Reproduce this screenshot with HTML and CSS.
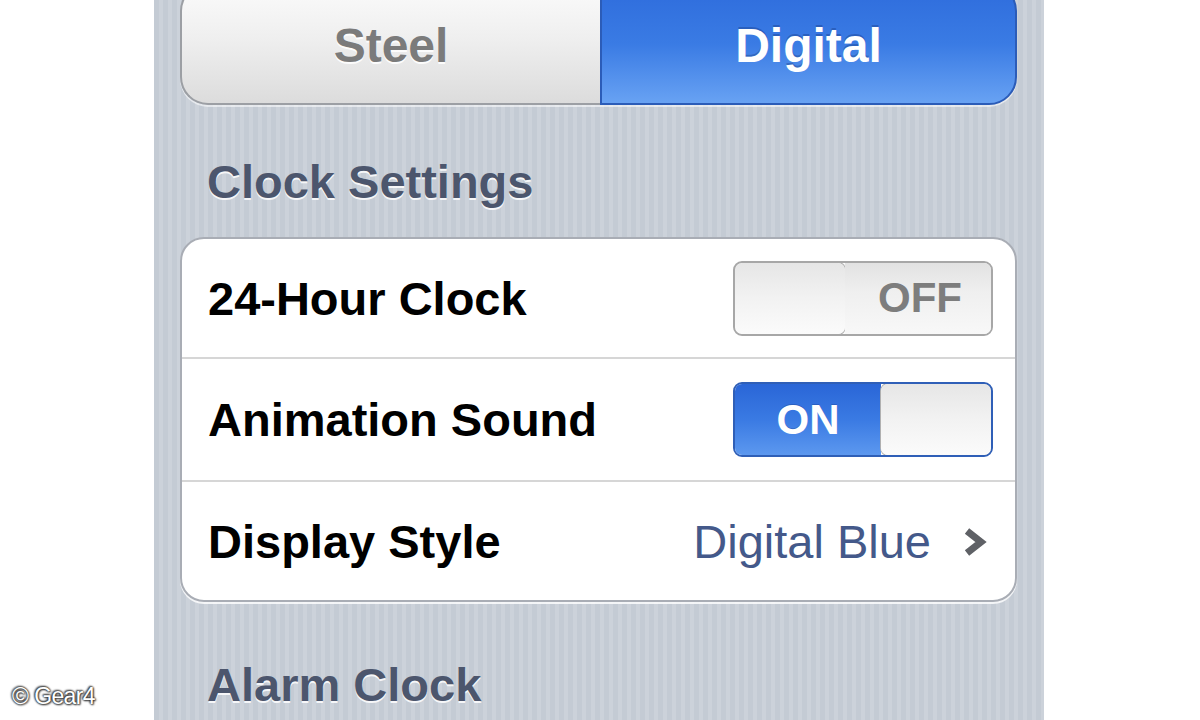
FILE: index.html
```html
<!DOCTYPE html>
<html lang="en">
<head>
<meta charset="utf-8">
<title>Clock Settings</title>
<link rel="stylesheet" href="styles.css">
</head>
<body>
<div class="page">
  <div class="gutter">
    <div class="credit">© Gear4</div>
  </div>
  <main class="panel">
    <div class="segmented">
      <div class="seg seg-off">Steel</div>
      <div class="seg seg-on">Digital</div>
    </div>

    <h2 class="section-title">Clock Settings</h2>
    <div class="card">
      <div class="row">
        <span class="label">24-Hour Clock</span>
        <div class="switch switch-off">
          <div class="knob"></div>
          <div class="track-off">OFF</div>
        </div>
      </div>
      <div class="row">
        <span class="label">Animation Sound</span>
        <div class="switch switch-on">
          <div class="track-on">ON</div>
          <div class="knob"></div>
        </div>
      </div>
      <div class="row">
        <span class="label">Display Style</span>
        <span class="value">Digital Blue</span>
        <svg class="chevron" width="28" height="30" viewBox="0 0 28 30"><path d="M6 4 L20 15 L6 26" fill="none" stroke="#5f6166" stroke-width="7" stroke-linejoin="miter"/></svg>
      </div>
    </div>

    <h2 class="section-title alarm">Alarm Clock</h2>
  </main>
  <div class="gutter-right"></div>
</div>
</body>
</html>
```
FILE: styles.css
```css
html, body {
  margin: 0;
  padding: 0;
  background: #ffffff;
  width: 1200px;
  height: 720px;
  overflow: hidden;
  font-family: "Liberation Sans", Arial, Helvetica, sans-serif;
}

.page {
  display: flex;
  height: 720px;
}

.gutter {
  width: 154px;
  flex: none;
  display: flex;
  flex-direction: column;
  justify-content: flex-end;
}

.credit {
  padding: 0 0 10px 12px;
  font-size: 23px;
  letter-spacing: -0.6px;
  color: #ffffff;
  text-shadow: 0 0 2px #333, 0 0 2px #333, 1px 1px 2px #444, -1px -1px 2px #444;
}

.gutter-right {
  flex: 1;
}

.panel {
  width: 890px;
  flex: none;
  box-sizing: border-box;
  padding: 0 27px 0 26px;
  height: 720px;
  overflow: hidden;
  background-color: #c9cfd7;
  background-image: repeating-linear-gradient(90deg, #c4cbd4 0px, #c4cbd4 5px, #ccd2da 5px, #ccd2da 9px);
}

/* Segmented control */
.segmented {
  display: flex;
  margin-top: -17px;
  height: 122px;
  border-radius: 28px;
  box-shadow: 0 2px 0 rgba(255,255,255,0.55);
}

.seg {
  box-sizing: border-box;
  height: 122px;
  display: flex;
  align-items: center;
  justify-content: center;
  font-size: 48px;
  font-weight: bold;
  padding-top: 2px;
}

.seg-off {
  width: 420px;
  border: 2px solid #9c9fa4;
  border-right: none;
  border-radius: 28px 0 0 28px;
  background: linear-gradient(#fbfbfb 0%, #efefef 45%, #dcdcdc 100%);
  color: #7b7b7b;
  text-shadow: 0 2px 0 rgba(255,255,255,0.9);
}

.seg-on {
  flex: 1;
  border: 2px solid #2b5cb8;
  border-radius: 0 28px 28px 0;
  background: linear-gradient(#2e6cdc 0%, #3a7be4 50%, #68a2f3 100%);
  color: #ffffff;
  text-shadow: 0 -2px 0 rgba(20,50,120,0.35);
}

/* Section titles */
.section-title {
  margin: 50px 0 28px 27px;
  font-size: 47px;
  line-height: 54px;
  font-weight: bold;
  color: #4c566d;
  text-shadow: 0 2px 0 rgba(255,255,255,0.85);
}

.section-title.alarm {
  margin-top: 56px;
}

/* Grouped card */
.card {
  background: #ffffff;
  border: 2px solid #a9adb5;
  border-radius: 24px;
  box-shadow: 0 2px 0 rgba(255,255,255,0.8);
  overflow: hidden;
}

.row {
  display: flex;
  align-items: center;
  height: 121px;
  padding: 0 22px 0 26px;
  border-top: 2px solid #d6d6d6;
}

.row:first-child {
  border-top: none;
  height: 118px;
}

.row:last-child {
  height: 118px;
  padding-right: 26px;
}

.label {
  flex: 1;
  font-size: 47px;
  font-weight: bold;
  color: #000000;
}

.value {
  font-size: 47px;
  color: #44598a;
  margin-right: 30px;
}

.chevron {
  display: block;
  margin-top: 2px;
}

/* Switches */
.switch {
  box-sizing: border-box;
  width: 260px;
  height: 75px;
  border: 2px solid #a7a7a7;
  border-radius: 9px;
  display: flex;
  overflow: hidden;
  font-size: 42px;
  font-weight: bold;
}

.knob {
  width: 110px;
  flex: none;
  box-sizing: border-box;
  background: linear-gradient(#e6e6e6 0%, #f2f2f2 50%, #fbfbfb 100%);
  border-radius: 7px;
  box-shadow: 0 0 0 1px #b0b0b0, 1px 0 2px rgba(0,0,0,0.15);
}

.track-off {
  flex: 1;
  display: flex;
  align-items: center;
  justify-content: center;
  background: linear-gradient(#e2e2e2 0%, #efefef 40%, #f8f8f8 100%);
  color: #7d7d7d;
  padding-left: 4px;
}

.track-on {
  flex: 1;
  display: flex;
  align-items: center;
  justify-content: center;
  background: linear-gradient(#2a66d7 0%, #3a7ae3 50%, #5c98ef 100%);
  color: #ffffff;
  text-shadow: 0 -1px 0 rgba(20,50,120,0.3);
}

.switch-on {
  border-color: #2f5fb7;
}
```
